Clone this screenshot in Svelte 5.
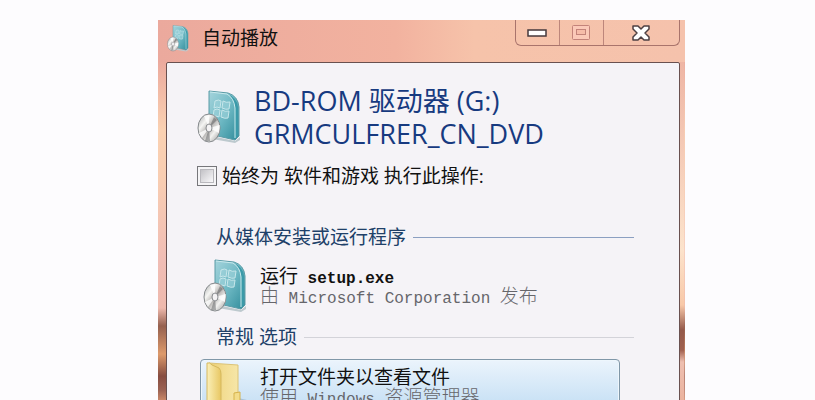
<script lang="ts">
  let always = $state(false);
</script>

{#snippet box()}
  <svg class="box-icon" viewBox="0 0 44 54" aria-hidden="true">
    <defs>
      <linearGradient id="cover" x1="0" y1="0" x2="1" y2="1">
        <stop offset="0" stop-color="#a5d4dc" />
        <stop offset="0.5" stop-color="#6fb9c4" />
        <stop offset="1" stop-color="#2f8b9a" />
      </linearGradient>
      <linearGradient id="disc" x1="0" y1="0" x2="1" y2="1">
        <stop offset="0" stop-color="#a2a4a6" />
        <stop offset="0.3" stop-color="#f5f5f3" />
        <stop offset="0.5" stop-color="#b3b1af" />
        <stop offset="0.7" stop-color="#f2f2f0" />
        <stop offset="1" stop-color="#8f8f8f" />
      </linearGradient>
    </defs>
    <path d="M15 46 L38 51 L43 47 V50 L38 53 L15 49z" fill="#bdc9ce" />
    <path d="M12 1 L31 3 Q41 6 42 17 V46 L38 50 L12 44z" fill="url(#cover)" stroke="#5a9ba6" />
    <path d="M31 4 Q37 8 38 18 V49 L41 46 V17 Q40 8 31 4z" fill="#3b9aa9" />
    <path d="M13 2 L30 4 Q37 8 38 18 V48" fill="none" stroke="#c8e9ec" stroke-width="1" />
    <g fill="#9fd2da" fill-opacity="0.6" stroke="#c6e6ea" stroke-width="1">
      <path d="M18 11 Q22 9 24 11 L23 18 Q20 16 17 18z" />
      <path d="M26 11 Q29 13 33 12 L32 19 Q29 20 25 18z" />
      <path d="M17 20 Q20 18 23 20 L22 27 Q19 25 16 27z" />
      <path d="M25 20 Q28 22 32 21 L31 28 Q28 29 24 27z" />
    </g>
    <ellipse cx="12" cy="38" rx="11" ry="14" fill="url(#disc)" stroke="#85898c" />
    <path d="M12 38 L7 26 L12 25z M12 38 L23 35 L22 43z M12 38 L2 43 L5 48z" fill="#fff" fill-opacity="0.8" />
    <path d="M12 38 L17 27 L20 30z M12 38 L8 51 L13 51z" fill="#5f6264" fill-opacity="0.5" />
    <ellipse cx="12" cy="38" rx="3" ry="4" fill="#f4f3f4" stroke="#8a8d90" />
  </svg>
{/snippet}

<main class="page">
  <section class="window" aria-label="自动播放">
    <header class="titlebar">
      <span class="app-icon">{@render box()}</span>
      <span class="title">自动播放</span>
      <div class="controls">
        <button class="control" aria-label="最小化">
          <svg width="20" height="8" viewBox="0 0 20 8">
            <rect x="1" y="1" width="18" height="6" fill="#fff" stroke="#46393c" stroke-width="1.5" />
          </svg>
        </button>
        <button class="control" aria-label="最大化" disabled>
          <svg width="18" height="15" viewBox="0 0 18 15" fill="none" stroke="#c3837a">
            <rect x="0.5" y="0.5" width="17" height="14" rx="1" fill="#fbc9b8" />
            <rect x="4.5" y="4.5" width="9" height="5" fill="#f6bca9" />
          </svg>
        </button>
        <button class="control close" aria-label="关闭">
          <svg width="18" height="16" viewBox="0 0 18 16">
            <path d="M1 1 H6 L9 4 L12 1 H17 V4 L13 8 L17 12 V15 H12 L9 12 L6 15 H1 V12 L5 8 L1 4z" fill="#fff" stroke="#4d4043" stroke-width="1.5" stroke-linejoin="round" />
          </svg>
        </button>
      </div>
    </header>

    <div class="content">
      <div class="drive">
        {@render box()}
        <h1>BD-ROM 驱动器 (G:)<br />GRMCULFRER_CN_DVD</h1>
      </div>

      <label class="always">
        <input type="checkbox" bind:checked={always} />
        <span>始终为 软件和游戏 执行此操作:</span>
      </label>

      <h2>从媒体安装或运行程序</h2>
      <button class="action">
        {@render box()}
        <span class="lines">
          <span class="name">运行<b>{' setup.exe'}</b></span>
          <span class="detail">由<span class="latin">{' Microsoft Corporation '}</span>发布</span>
        </span>
      </button>

      <h2 class="general">常规 选项</h2>
      <button class="action selected">
        <svg class="box-icon" viewBox="0 0 44 54" aria-hidden="true">
          <defs>
            <linearGradient id="folder">
              <stop offset="0" stop-color="#e9cd70" />
              <stop offset="0.5" stop-color="#f3dd92" />
              <stop offset="1" stop-color="#f6e6a8" />
            </linearGradient>
            <linearGradient id="flap">
              <stop offset="0" stop-color="#fbf0b8" />
              <stop offset="1" stop-color="#e8c763" />
            </linearGradient>
          </defs>
          <path d="M35 36 L44 38 V47 L34 50z" fill="#a9c0d8" />
          <path d="M6 1 L35 3 V48 L11 46z" fill="url(#folder)" stroke="#dcc377" />
          <path d="M4 1 Q7 0 9 3 L16 6 Q18 8 18 12 V42 L12 52 L4 48z" fill="url(#flap)" stroke="#d5b85e" />
          <path d="M31 31 L37 30 V48 L31 50z" fill="#f3dc8a" stroke="#d6b24b" />
        </svg>
        <span class="lines">
          <span class="name">打开文件夹以查看文件</span>
          <span class="detail">使用<span class="latin">{' Windows '}</span>资源管理器</span>
        </span>
      </button>
    </div>
  </section>
</main>

<style>
  :global(body) {
    margin: 0;
    background: #fdfcfe;
  }
  .page {
    box-sizing: border-box;
    height: 100vh;
    overflow: hidden;
    padding: 20px 16% 0 158px;
    font-family: "Open Sans", "Noto Sans CJK SC", sans-serif;
    color: #111;
  }
  .window {
    box-sizing: border-box;
    min-height: 100%;
    padding: 0 5px 8px 8px;
    background:
      linear-gradient(90deg, #eba99d, #f2b29f 45%, #f6c3aa 60%, #f5c2ac) 0 0 / 100% 42px no-repeat,
      linear-gradient(#eeb5a4 40px, #fce3cc 230px, #f8c8a8 285px, #94594a 310px, #a0604f 330px, #eebfb0 342px, #e8a990) 100% 0 / 50% 100% no-repeat,
      linear-gradient(#eba99d 40px, #fad1b2 110px, #f8cdb2 160px, #f0bdb5 240px, #eeb9ad 288px, #95604f 306px, #dd9a6c 334px, #874d41 356px, #9b6253 370px, #c88768 380px);
  }
  .titlebar {
    display: flex;
    align-items: flex-start;
    height: 42px;
  }
  .app-icon {
    width: 22px;
    margin: 5px 0 0 1px;
  }
  .app-icon .box-icon {
    width: 22px;
    height: 27px;
  }
  .title {
    margin: 4px 0 0 13px;
    font-size: 19px;
    line-height: 28px;
  }
  .controls {
    display: flex;
    margin-left: auto;
    border: 1px solid #a9746c;
    border-top: none;
    border-radius: 0 0 6px 6px;
  }
  .control {
    display: flex;
    align-items: center;
    justify-content: center;
    width: 44px;
    height: 25px;
    padding: 0;
    border: none;
    border-right: 1px solid #bd867b;
    background: none;
  }
  .control.close {
    width: 75px;
    border-right: none;
  }
  .box-icon {
    display: block;
    flex: none;
    width: 44px;
    height: 54px;
  }
  .content {
    border: 1px solid #69504f;
    border-radius: 2px 2px 0 0;
    padding: 20px 45px 0 30px;
    background: #f5f3f7;
  }
  .drive {
    display: flex;
    align-items: center;
    gap: 13px;
    height: 68px;
  }
  h1 {
    margin: 0;
    color: #173a80;
    font-size: 27px;
    font-weight: 400;
    line-height: 33px;
    white-space: nowrap;
  }
  .always {
    display: flex;
    align-items: center;
    gap: 5px;
    margin-top: 10px;
    font-size: 19px;
    line-height: 30px;
    white-space: nowrap;
  }
  .always input {
    appearance: none;
    flex: none;
    width: 20px;
    height: 20px;
    margin: 0;
    border: 1px solid #76767a;
    background: linear-gradient(135deg, #b5b4b9, #f7f6f8 80%);
    box-shadow: inset 0 0 0 2px #f5f4f6, inset 0 0 0 3px #b9b8bd;
  }
  .always input:checked {
    background: #3b6ea8;
  }
  h2 {
    display: flex;
    align-items: center;
    gap: 7px;
    margin: 31px 0 0 19px;
    color: #204068;
    font-size: 19px;
    font-weight: 400;
    line-height: 30px;
    white-space: nowrap;
  }
  h2::after {
    content: "";
    flex: 1;
    height: 1px;
    background: #8b9fc1;
  }
  h2.general {
    margin-top: 4px;
  }
  h2.general::after {
    background: #d3d3d9;
  }
  .action {
    display: flex;
    align-items: flex-start;
    gap: 13px;
    box-sizing: border-box;
    width: calc(100% - 17px);
    height: 66px;
    margin: 0 0 0 3px;
    padding: 6px 2px 0;
    border: 1px solid transparent;
    border-radius: 4px;
    background: none;
    color: inherit;
    font-family: "Noto Sans CJK SC", sans-serif;
    font-size: 19px;
    line-height: 20px;
    text-align: left;
    white-space: pre;
  }
  .action.selected {
    margin-top: 7px;
    padding-top: 2px;
    border-color: #8097a8;
    background: linear-gradient(#ebf4fc, #c3def4 50px);
    box-shadow: inset 0 0 0 1px #edf6fc;
  }
  .lines {
    display: flex;
    flex-direction: column;
    padding-top: 6px;
  }
  .selected .lines {
    padding-top: 4px;
  }
  .detail {
    color: #66666b;
    font-weight: 300;
  }
  .name b,
  .latin {
    font-family: "Liberation Mono", monospace;
    font-size: 16px;
    line-height: 10px;
  }
</style>
